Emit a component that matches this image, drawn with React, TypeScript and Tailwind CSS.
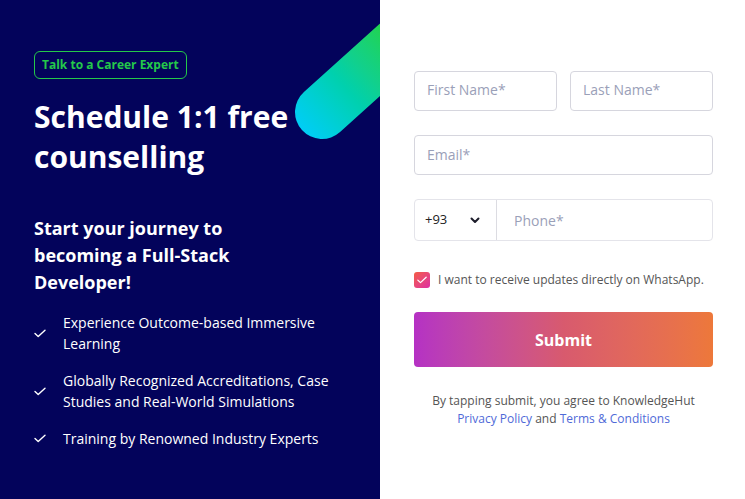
import React from 'react';

const bullets = [
  'Experience Outcome-based Immersive Learning',
  'Globally Recognized Accreditations, Case Studies and Real-World Simulations',
  'Training by Renowned Industry Experts',
];

function Check({ className = '' }: { className?: string }) {
  return (
    <svg viewBox="0 0 12 9" className={className} fill="none" stroke="currentColor" strokeWidth="1.4" strokeLinecap="round" strokeLinejoin="round">
      <path d="M1 4.6 4.2 7.6 11 1.2" />
    </svg>
  );
}

export default function App() {
  return (
    <div className="flex w-[745px] h-[499px] overflow-hidden font-['Open_Sans',sans-serif]">
      {/* Left panel */}
      <div className="relative w-[380px] h-full shrink-0 overflow-hidden bg-[#03035b] pl-[34px] pt-[51px] text-white">
        {/* decorative capsule */}
        <div className="absolute left-[295px] top-[85px] w-[220px] h-[54px] rounded-full origin-[27px_27px] -rotate-[42deg] bg-linear-to-r from-[#00cdf6] via-[#12d08a] via-40% to-[#27d42a] to-65%" />

        <div className="relative inline-flex items-center h-[28px] px-[7px] rounded-md border border-[#24c94a] text-[12px] font-bold text-[#24c94a]">
          Talk to a Career Expert
        </div>

        <h1 className="relative mt-[18px] text-[30px] leading-[40px] font-bold">
          Schedule 1:1 free
          <br />
          counselling
        </h1>

        <h2 className="relative mt-[38px] text-[18px] leading-[27px] font-bold">
          Start your journey to
          <br />
          becoming a Full-Stack
          <br />
          Developer!
        </h2>

        <ul className="relative mt-[16px] flex flex-col gap-[16px] pr-[40px]">
          {bullets.map((b) => (
            <li key={b} className="flex items-center gap-[17px]">
              <Check className="w-[12px] h-[9px] shrink-0" />
              <span className="text-[14px] leading-[21px]">{b}</span>
            </li>
          ))}
        </ul>
      </div>

      {/* Right panel */}
      <div className="flex-1 bg-white pl-[34px] pr-[32px] pt-[71px]">
        <div className="flex gap-[13px]">
          <input
            placeholder="First Name*"
            className="w-0 flex-1 h-[40px] rounded-[4px] border border-[#d6d6de] px-[12px] pb-[3px] text-[14px] placeholder:text-[#9aa0b8] outline-none"
          />
          <input
            placeholder="Last Name*"
            className="w-0 flex-1 h-[40px] rounded-[4px] border border-[#d6d6de] px-[12px] pb-[3px] text-[14px] placeholder:text-[#9aa0b8] outline-none"
          />
        </div>

        <input
          placeholder="Email*"
          className="mt-[24px] w-full h-[40px] rounded-[4px] border border-[#d6d6de] px-[12px] pb-[2px] text-[14px] placeholder:text-[#9aa0b8] outline-none"
        />

        <div className="mt-[24px] flex h-[42px] rounded-[4px] border border-[#e4e4ea]">
          <div className="flex items-center justify-between w-[82px] pl-[10px] pr-[16px] border-r border-[#dcdce2]">
            <span className="text-[13px] text-[#222]">+93</span>
            <svg viewBox="0 0 10 7" className="w-[10px] h-[7px]" fill="none" stroke="#1d1d2b" strokeWidth="2" strokeLinecap="round" strokeLinejoin="round">
              <path d="M1.5 1.5 5 5 8.5 1.5" />
            </svg>
          </div>
          <input
            placeholder="Phone*"
            className="w-0 flex-1 px-[17px] text-[14px] placeholder:text-[#9aa0b8] outline-none"
          />
        </div>

        <label className="mt-[30px] flex items-center gap-[8px]">
          <span className="flex items-center justify-center w-[16px] h-[16px] rounded-[3px] bg-linear-to-br from-[#f45a3e] to-[#de2aa2]">
            <svg viewBox="0 0 12 9" className="w-[10px] h-[8px]" fill="none" stroke="white" strokeWidth="1.5" strokeLinecap="round" strokeLinejoin="round">
              <path d="M1 4.6 4.2 7.6 11 1.2" />
            </svg>
          </span>
          <span className="text-[12px] text-[#555]">I want to receive updates directly on WhatsApp.</span>
        </label>

        <button className="mt-[23px] w-full h-[55px] rounded-[4px] bg-linear-to-r from-[#b531c4] via-[#d85a6e] to-[#ed783a] text-white text-[16px] font-bold">
          Submit
        </button>

        <p className="mt-[25px] text-center text-[12px] leading-[18px] text-[#555]">
          By tapping submit, you agree to KnowledgeHut
          <br />
          <a className="text-[#4f6ad8]">Privacy Policy</a> and{' '}
          <a className="text-[#4f6ad8]">Terms &amp; Conditions</a>
        </p>
      </div>
    </div>
  );
}
